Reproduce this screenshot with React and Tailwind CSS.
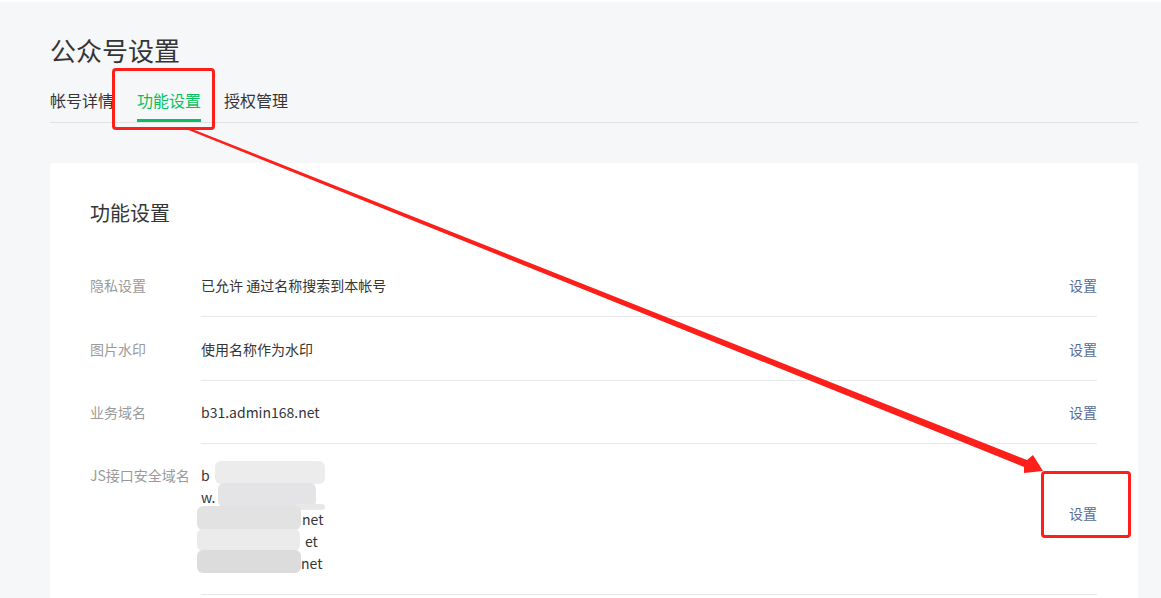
import React from "react";

const font = { fontFamily: '"Noto Sans CJK SC", "Noto Sans", sans-serif' };

function Row({ label, children, tall }) {
  return (
    <div className="flex">
      <div className={`w-[111px] shrink-0 text-[14px] text-[#9a9a9a] ${tall ? "pt-[20px] leading-[22px]" : "flex items-center"}`}>
        {label}
      </div>
      <div className="flex-1 flex items-center border-b border-[#e7e7eb]">
        <div className={`flex-1 text-[14px] text-[#353535] ${tall ? "py-[20px] leading-[22px]" : "h-[62px] flex items-center"}`}>
          {children}
        </div>
        <div className={`text-[14px] text-[#576b95] ${tall ? "pb-[12px]" : ""}`}>设置</div>
      </div>
    </div>
  );
}

const blurCells = [
  // [left, top, width, height, color]
  [18, 5, 110, 23, "#ececec"],
  [21, 27, 98, 24, "#e4e4e6"],
  [98, 48, 30, 6, "#e8e8e8"],
  [0, 50, 104, 24, "#e2e2e2"],
  [0, 73, 103, 22, "#ebebeb"],
  [0, 94, 104, 23, "#dcdcdc"],
];

export default function App() {
  return (
    <div className="relative w-[1161px] h-[598px] overflow-hidden bg-[#f6f7f9]" style={font}>
      <div className="h-[2px] bg-white" />
      <div className="px-[50px] pr-[23px]">
        <h1 className="pt-[30px] text-[26px] leading-[36px] text-[#353535] font-normal">公众号设置</h1>
        <div className="mt-[21px] flex gap-[23px] border-b border-[#e0e1e2] text-[16px] leading-[22px]">
          <div className="pb-[10px] text-[#353535]">帐号详情</div>
          <div className="pb-[8px] text-[#07c160] border-b-[3px] border-[#07c160]">功能设置</div>
          <div className="pb-[10px] text-[#353535]">授权管理</div>
        </div>
        <div className="mt-[40px] bg-white rounded-[3px] pl-[40px] pr-[41px] pt-[36px] h-[460px]">
          <div className="text-[20px] leading-[28px] text-[#353535]">功能设置</div>
          <div className="mt-[27px]">
            <Row label="隐私设置">已允许 通过名称搜索到本帐号</Row>
            <div className="h-[1px]" />
            <Row label="图片水印">使用名称作为水印</Row>
            <Row label="业务域名">b31.admin168.net</Row>
            <Row label="JS接口安全域名" tall>
              <div className="relative">
                <div>b</div>
                <div>w.</div>
                <div className="pl-[101px]">net</div>
                <div className="pl-[104px]">et</div>
                <div className="pl-[100px]">net</div>
                <div className="absolute left-[-4px] top-[-8px] w-[130px] h-[120px] pointer-events-none">
                  {blurCells.map(([l, t, w, h, c], i) => (
                    <div
                      key={i}
                      className="absolute rounded-[6px]"
                      style={{ left: l, top: t, width: w, height: h, background: c }}
                    />
                  ))}
                </div>
              </div>
            </Row>
          </div>
        </div>
      </div>

      {/* annotations */}
      <div className="absolute left-[112px] top-[68px] w-[103px] h-[62px] border-[3px] border-[#fd1f1a] rounded-[4px] pointer-events-none" />
      <div className="absolute left-[1041px] top-[471px] w-[90px] h-[67px] border-[3px] border-[#fd1f1a] rounded-[4px] pointer-events-none" />
      <svg className="absolute left-0 top-0 pointer-events-none" width="1161" height="598">
        <polygon points="187,127 1027,460 1033,455 1043,471 1024,473 1024,467 186,129" fill="#fd1f1a" />
      </svg>
    </div>
  );
}
